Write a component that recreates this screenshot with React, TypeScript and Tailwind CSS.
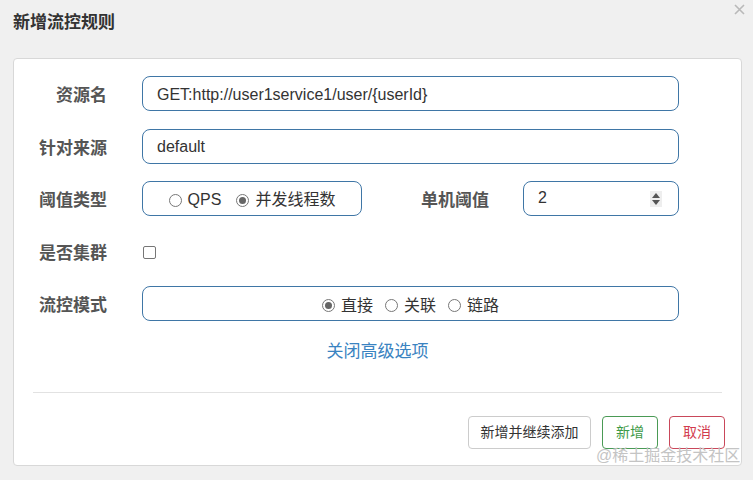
import { ReactNode } from "react";

const cjk = "font-['Liberation_Sans','Noto_Sans_CJK_SC',sans-serif]";

function Label({ children, className = "" }: { children: ReactNode; className?: string }) {
  return (
    <div className={`mt-[4px] text-[17px] font-bold text-[#555] text-right leading-none ${className}`}>
      {children}
    </div>
  );
}

function Radio({ checked, label }: { checked?: boolean; label: string }) {
  return (
    <span className="flex items-center gap-[6px]">
      <span className="flex h-[13px] w-[13px] items-center justify-center rounded-full border border-[#777] bg-white">
        {checked && <span className="h-[7px] w-[7px] rounded-full bg-[#666]" />}
      </span>
      <span className="text-[16px] text-[#333] leading-none">{label}</span>
    </span>
  );
}

const box = "h-[35px] rounded-[8px] border border-[#3f76a6] bg-white";

function Row({ label, children }: { label: string; children: ReactNode }) {
  return (
    <div className="flex h-[35px] items-center">
      <Label className="w-[93px]">{label}</Label>
      <div className="ml-[35px] flex flex-1 items-center">{children}</div>
    </div>
  );
}

export default function App() {
  return (
    <div className={`relative h-[480px] w-[753px] overflow-hidden bg-[#f0f0f0] ${cjk}`}>
      <div className="flex h-[58px] items-start justify-between">
        <h1 className="ml-[13px] mt-[14px] text-[17px] font-bold text-[#333] leading-none">
          新增流控规则
        </h1>
        <svg className="mr-[8px] mt-[4px]" width="11" height="11" viewBox="0 0 11 11">
          <path d="M1 1L10 10M10 1L1 10" stroke="#b9b9b9" strokeWidth="1.6" />
        </svg>
      </div>

      <div className="mx-[13px] h-[408px] w-[729px] rounded-[4px] border border-[#d8d8d8] bg-white pt-[17px]">
        <div className="flex flex-col gap-[17.5px] pr-[62px]">
          <Row label="资源名">
            <div className={`${box} flex flex-1 items-center pl-[14px] pt-[2px] text-[16px] text-[#333]`}>
              GET:http://user1service1/user/{"{userId}"}
            </div>
          </Row>
          <Row label="针对来源">
            <div className={`${box} flex flex-1 items-center pl-[14px] pt-[2px] text-[16px] text-[#333]`}>
              default
            </div>
          </Row>
          <Row label="阈值类型">
            <div className={`${box} flex w-[220px] items-center justify-center gap-[15px] pt-[3px]`}>
              <Radio label="QPS" />
              <Radio checked label="并发线程数" />
            </div>
            <Label className="ml-[57px] w-[70px]">单机阈值</Label>
            <div className={`${box} ml-[34px] flex flex-1 items-center justify-between pl-[14px] pr-[16px] text-[16px] text-[#333]`}>
              <span className="-mt-[2px]">2</span>
              <span className="flex h-[16px] w-[12px] flex-col items-center justify-center gap-[2px] bg-[#eee]">
                <svg width="8" height="5" viewBox="0 0 8 5"><path d="M4 0L8 5H0Z" fill="#555" /></svg>
                <svg width="8" height="5" viewBox="0 0 8 5"><path d="M0 0H8L4 5Z" fill="#555" /></svg>
              </span>
            </div>
          </Row>
          <Row label="是否集群">
            <span className="ml-[1px] mt-[2px] h-[13px] w-[13px] rounded-[2px] border border-[#767676] bg-white" />
          </Row>
          <Row label="流控模式">
            <div className={`${box} flex flex-1 items-center justify-center gap-[12px] pt-[4px]`}>
              <Radio checked label="直接" />
              <Radio label="关联" />
              <Radio label="链路" />
            </div>
          </Row>
        </div>

        <div className="mt-[22px] text-center text-[17px] leading-none text-[#3a83c1]">关闭高级选项</div>

        <div className="mx-[19px] mt-[32px] border-t border-[#e2e2e2]" />

        <div className="mr-[16px] mt-[23px] flex justify-end gap-[11px] text-[14px]">
          <button className="h-[33px] w-[123px] rounded-[4px] border border-[#ccc] bg-white text-[#333]">
            新增并继续添加
          </button>
          <button className="h-[33px] w-[56px] rounded-[4px] border border-[#4a9a55] bg-white text-[#3d9a48]">
            新增
          </button>
          <button className="h-[33px] w-[56px] rounded-[4px] border border-[#c9485a] bg-white text-[#d23c4e]">
            取消
          </button>
        </div>
      </div>

      <div className="absolute left-[596px] top-[448px] text-[16px] leading-none text-[#c4c4c4]">
        @稀土掘金技术社区
      </div>
    </div>
  );
}
